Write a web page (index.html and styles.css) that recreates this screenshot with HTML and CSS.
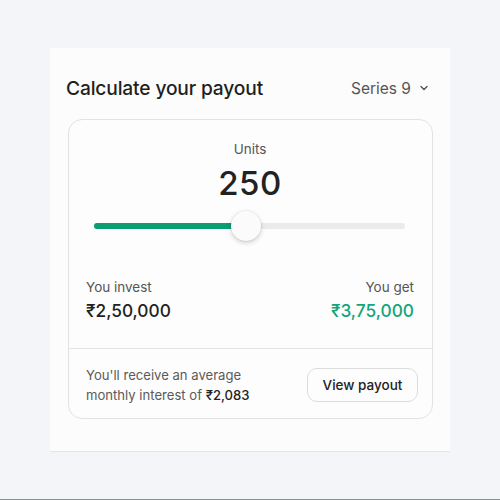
FILE: index.html
```html
<!DOCTYPE html>
<html>
<head>
<meta charset="utf-8">
<link rel="stylesheet" href="styles.css">
</head>
<body>
<div class="page">
  <section class="panel">
    <header class="head">
      <h1 class="title">Calculate your payout</h1>
      <div class="series">Series 9
        <svg class="chev" width="10" height="10" viewBox="0 0 10 10"><path d="M2 3.5 L5 6.5 L8 3.5" fill="none" stroke="#555" stroke-width="1.4" stroke-linecap="round" stroke-linejoin="round"/></svg>
      </div>
    </header>
    <div class="card">
      <div class="top">
        <div class="units-label">Units</div>
        <div class="units">250</div>
        <div class="slider">
          <div class="track"><div class="fill" style="width:49%"></div></div>
          <div class="thumb" style="left:49%"></div>
        </div>
        <div class="amounts">
          <div class="col">
            <div class="lbl">You invest</div>
            <div class="val">₹2,50,000</div>
          </div>
          <div class="col right">
            <div class="lbl">You get</div>
            <div class="val green">₹3,75,000</div>
          </div>
        </div>
      </div>
      <div class="foot">
        <p class="note">You'll receive an average<br>monthly interest of <b>₹2,083</b></p>
        <button class="btn">View payout</button>
      </div>
    </div>
  </section>
</div>
</body>
</html>
```
FILE: styles.css
```css
html, body { margin: 0; padding: 0; }
body {
  background: #f4f5f9;
  font-family: Inter, "Noto Sans", sans-serif;
  width: 500px;
  height: 500px;
  box-sizing: border-box;
  border-bottom: 1px solid #8a8d8f;
  overflow: hidden;
}
.page { padding: 48px 50px 0; }
.panel {
  background: #fcfcfc;
  width: 400px;
  height: 403px;
  box-sizing: border-box;
  padding: 28px 17px 0 18px;
  box-shadow: 0 1px 0 #e4e5e7;
}
.head {
  display: flex;
  justify-content: space-between;
  align-items: center;
}
.title {
  margin: 0 0 0 -2px;
  font-size: 19.2px;
  font-weight: 500;
  color: #1f1f1f;
  letter-spacing: -0.15px;
}
.series {
  font-size: 15.5px;
  color: #555;
  display: flex;
  align-items: center;
  gap: 8px;
  padding-right: 4px;
}
.card {
  margin-top: 19px;
  border: 1px solid #e2e2e2;
  border-radius: 14px;
  height: 300px;
  box-sizing: border-box;
  background: #fdfdfd;
}
.top { padding: 21px 18px 0 17px; height: 229px; box-sizing: border-box; border-bottom: 1px solid #e3e3e3; }
.units-label { text-align: center; font-size: 13.5px; color: #555; }
.units { text-align: center; font-size: 33px; font-weight: 500; color: #222; margin-top: 6px; line-height: 40px; letter-spacing: 0.5px; }
.slider { position: relative; margin: 8px 9px 0 8px; height: 30px; }
.track { position: absolute; left: 0; right: 0; top: 12px; height: 6px; border-radius: 3px; background: #ebebeb; }
.fill { height: 100%; background: #0c9d72; border-radius: 3px; }
.thumb {
  position: absolute; top: 0; width: 30px; height: 30px; margin-left: -15px;
  border-radius: 50%; background: #fbfbfb;
  box-shadow: 0 2px 5px rgba(0,0,0,0.18), 0 0 0 1px rgba(0,0,0,0.04);
}
.amounts { display: flex; justify-content: space-between; margin-top: 38px; }
.col.right { text-align: right; }
.lbl { font-size: 13.5px; color: #555; }
.val { font-size: 17.3px; font-weight: 500; color: #222; margin-top: 5px; }
.green { color: #13a57b; }
.foot { display: flex; justify-content: space-between; align-items: center; padding: 2px 14px 0 17px; height: 69px; box-sizing: border-box; }
.note { margin: 0; font-size: 13.1px; color: #5a5a5a; line-height: 20px; }
.note b { color: #222; font-weight: 500; }
.btn {
  font-family: inherit; font-size: 13.5px; font-weight: 500; color: #222;
  background: #fdfdfd; border: 1px solid #dcdcdc; border-radius: 10px;
  width: 111px; height: 34px; padding: 0;
}
```
